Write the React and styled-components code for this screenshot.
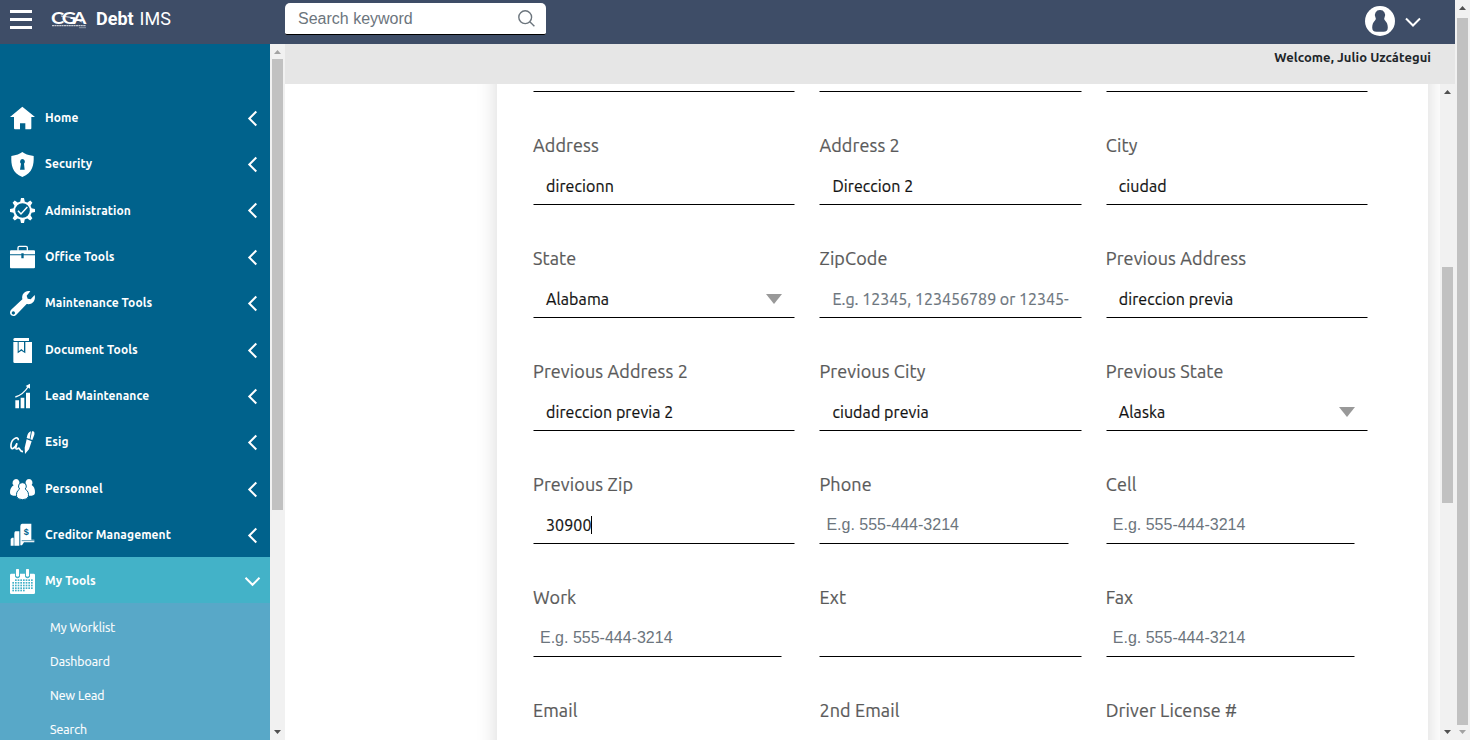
import React from 'react';
import styled, { createGlobalStyle } from 'styled-components';

const GlobalStyle = createGlobalStyle`
  * { box-sizing: border-box; }
  body { margin: 0; overflow: hidden; background: #fff; font-family: Ubuntu, "Noto Sans", sans-serif; }
`;

const Screen = styled.div`
  display: flex;
  width: 1470px;
  height: 740px;
  overflow: hidden;
`;
const Page = styled.div`
  flex: 1;
  display: flex;
  flex-direction: column;
  min-width: 0;
`;

const Header = styled.header`
  height: 44px;
  flex: none;
  display: flex;
  align-items: flex-start;
  background: #3e4d67;
  color: #fff;
`;
const Brand = styled.div`
  width: 285px;
  height: 38px;
  padding-left: 10px;
  display: flex;
  align-items: center;
`;
const Burger = styled.div`
  width: 22px;
  height: 19px;
  margin-top: 1px;
  display: flex;
  flex-direction: column;
  justify-content: space-between;
  i { height: 3px; background: #fff; }
`;
const Logo = styled.svg`
  width: 36px;
  height: 20px;
  margin: 0 8px 0 20px;
`;
const Product = styled.div`
  font: 400 18px/38px Roboto, sans-serif;
  white-space: pre;
  word-spacing: 1.5px;
  b { font-weight: 700; }
`;
const SearchBox = styled.div`
  width: 261px;
  height: 32px;
  margin-top: 3px;
  padding: 0 11px 0 13px;
  display: flex;
  align-items: center;
  justify-content: space-between;
  background: #fff;
  border-bottom: 1px solid #000;
  border-radius: 5px 5px 2px 2px;
  color: #6c757d;
  font: 16px "Liberation Sans", Arial, sans-serif;
`;
const Account = styled.div`
  margin-left: auto;
  height: 41px;
  padding-right: 34px;
  display: flex;
  align-items: center;
  gap: 10px;
`;
const AccountArrow = styled.svg`
  width: 16px;
  height: 10px;
  margin-top: 3px;
`;

const Body = styled.div`
  flex: 1;
  display: flex;
  min-height: 0;
`;
const Sidebar = styled.nav`
  width: 270px;
  flex: none;
  padding-top: 49.4px;
  background: #00628c;
  color: #fff;
  overflow: hidden;
`;
const MenuRow = styled.div`
  height: 46.36px;
  padding: 3.4px ${p => (p.$open ? 9 : 12)}px 0 10px;
  display: flex;
  align-items: center;
  background: ${p => (p.$open ? '#43b2c8' : 'transparent')};
  font-size: 12px;
  font-weight: 700;
  letter-spacing: 0.1px;
`;
const MenuIcon = styled.svg`
  width: 25px;
  height: 25px;
  margin-right: 10px;
  flex: none;
  fill: #fff;
`;
const MenuLabel = styled.div`
  flex: 1;
  height: 18px;
  margin-top: -0.9px;
  line-height: 18px;
`;
const SubMenu = styled.div`
  height: 200px;
  padding: 7.4px 0 0 50px;
  background: #58a8c8;
`;
const SubItem = styled.div`
  height: 34px;
  line-height: 34px;
  font-size: 12.3px;
  -webkit-text-stroke: 0.15px;
`;

const Main = styled.main`
  flex: 1;
  display: flex;
  flex-direction: column;
  min-width: 0;
`;
const Welcome = styled.div`
  height: 40px;
  flex: none;
  padding: 4px 24px 0 0;
  background: #e6e6e6;
  color: #212529;
  font-size: 13px;
  font-weight: 700;
  letter-spacing: 0.06px;
  line-height: 19px;
  text-align: right;
`;
const Content = styled.div`
  flex: 1;
  display: flex;
  min-height: 0;
`;
const Canvas = styled.div`
  flex: 1;
  overflow: hidden;
  padding-left: 212px;
`;
const Card = styled.section`
  width: 931px;
  height: 900px;
  margin-top: -40px;
  padding: 40px 60px 0 36px;
  background: #fff;
  box-shadow: 0 0 20px rgba(0, 0, 0, 0.16);
`;
const Grid = styled.div`
  display: grid;
  grid-template-columns: repeat(3, 262.4px);
  column-gap: 24px;
`;
const FieldTail = styled.div`
  height: 8px;
  border: 1px solid transparent;
  border-bottom-color: #000;
`;
const Field = styled.div`
  height: 113px;
  padding-top: 40px;
`;
const Label = styled.div`
  height: 27px;
  line-height: 27px;
  font-size: 18px;
  letter-spacing: 0.12px;
  color: #5a5a5a;
  -webkit-text-stroke: 0.2px;
`;
const Control = styled.div`
  width: ${p => (p.$phone ? '249.2px' : '100%')};
  height: 46px;
  padding: ${p => (p.$phone ? '14px 6px 0' : '16px 12px 0')};
  display: flex;
  justify-content: space-between;
  border: 1px solid transparent;
  border-bottom-color: #000;
  color: ${p => (p.$hint ? '#6c757d' : '#111')};
  font-family: ${p => (p.$phone ? '"Liberation Sans", Arial, sans-serif' : 'inherit')};
  font-size: 16px;
  letter-spacing: ${p => (p.$hint ? 0 : 0.09)}px;
  line-height: ${p => (p.$phone ? 23 : 21)}px;
  -webkit-text-stroke: ${p => (p.$phone ? 0 : 0.2)}px;
`;
const Typed = styled.span`
  display: flex;
  white-space: nowrap;
`;
const Caret = styled.i`
  width: 1px;
  height: 18px;
  margin: 1px 0 0 -0.9px;
  background: #000;
`;
const Triangle = styled.i`
  width: 0;
  height: 0;
  margin-top: 5px;
  border: 8px solid transparent;
  border-top: 10px solid #999;
  border-bottom: 0;
`;

const Track = styled.div`
  width: 15px;
  flex: none;
  padding: 0 2px;
  display: flex;
  flex-direction: column;
  align-items: center;
  background: #f1f1f1;
`;
const Arrow = styled.i`
  width: 7px;
  height: 4px;
  flex: none;
  margin: ${p => (p.$down ? 'auto 0 6px' : '6px 0 5px')};
  background: ${p => (p.$dim ? '#a3a3a3' : '#505050')};
  clip-path: ${p => (p.$down ? 'polygon(0 0, 100% 0, 50% 100%)' : 'polygon(50% 0, 100% 100%, 0 100%)')};
`;
const Thumb = styled.div`
  width: 11px;
  height: ${p => p.$h}px;
  margin-top: ${p => p.$top}px;
  flex: none;
  background: #c1c1c1;
`;

function Scrollbar({ top, h, upDim, downDim }) {
  return (
    <Track>
      <Arrow $dim={upDim} />
      <Thumb $top={top} $h={h} />
      <Arrow $down $dim={downDim} />
    </Track>
  );
}

const BG = '#00628c';

const icons = {
  home: <path d="M37 2 L75 33 H64 V67 Q64 70 61 70 H46 V52 H30 V70 H15 Q12 70 12 67 V33 H0 Z" />,
  shield: (
    <>
      <path d="M37 0 C44 6 55 10 71 12 C72 40 68 62 37 75 C6 62 3 40 4 12 C19 10 30 6 37 0Z" />
      <path fill={BG} d="M37 21 a8 8 0 0 1 5 14 L44 53 H30 L33 35 a8 8 0 0 1 4 -14Z" />
    </>
  ),
  gear: (
    <>
      {[0, 45, 90, 135, 180, 225, 270, 315].map(a => (
        <path key={a} transform={`rotate(${a} 37.5 37.5)`} d="M33 0 H42 L45 14 H30 Z" />
      ))}
      <circle cx="37.5" cy="37.5" r="25" fill={BG} stroke="#fff" strokeWidth="6" />
      <path d="M24 38 L33 48 L52 27" fill="none" stroke="#fff" strokeWidth="4.5" />
    </>
  ),
  briefcase: (
    <>
      <path d="M24 17 V8 Q24 4 28 4 H48 Q52 4 52 8 V17" fill="none" stroke="#fff" strokeWidth="4" />
      <path d="M3 16 H72 Q75 16 75 19 V28 H41 V25 H34 V28 H0 V19 Q0 16 3 16Z" />
      <path d="M0 31 H34 V40 H41 V31 H75 V67 Q75 70 72 70 H3 Q0 70 0 67Z" />
    </>
  ),
  wrench: (
    <path
      fillRule="evenodd"
      d="M61 1 L50 14 L53 23 L62 25 L74 12 C78 28 68 42 50 39 L19 71 C13 78 1 75 0 66 C0 61 2 58 5 55 L37 25 C34 9 46 -3 61 1Z M10 61 a5 5 0 1 0 .1 0Z"
    />
  ),
  book: (
    <>
      <path d="M14 0 H57 V9 H14 Q10 9 10 5 Q10 0 14 0Z" />
      <path d="M10 12 H66 V75 H14 Q10 75 10 71Z" />
      <path fill={BG} d="M23 12 H26 V40 L34 33 L42 40 V12 H46 V46 L34 38 L23 46Z" />
    </>
  ),
  chart: (
    <>
      <path d="M16 49 H27 V73 H16Z M32 41 H43 V73 H32Z M48 26 H60 V73 H48Z" />
      <path d="M16 39 C34 34 46 22 56 6" fill="none" stroke="#fff" strokeWidth="4" />
      <path d="M60 -1 L60 14 L47 6Z" />
    </>
  ),
  sign: (
    <>
      <path
        d="M25 31 C25 16 5 26 3 44 C1 64 14 56 21 40 C18 50 14 62 24 55 C30 51 27 65 39 65"
        fill="none"
        stroke="#fff"
        strokeWidth="5"
      />
      <path d="M50 28 L65 34 L57 58 L45 72 L44 53Z M50 24 Q53 6 63 4 L59 27Z M61 28 L66 4 Q75 2 73 14 L67 30Z" />
    </>
  ),
  people: (
    <>
      <path d="M18 6 a11 11 0 0 1 8 18 Q34 27 33 35 L26 44 L26 56 H10 Q0 56 0 46 Q0 32 11 25 A11 11 0 0 1 18 6Z" />
      <path d="M57 6 a11 11 0 0 1 8 18 Q75 30 75 46 Q75 56 65 56 H49 V44 L42 35 Q42 27 49 24 A11 11 0 0 1 57 6Z" />
      <path
        stroke={BG}
        strokeWidth="3"
        d="M37.5 17 a11 11 0 0 1 8 19 Q58 44 55 59 Q52 68 37.5 68 Q23 68 20 59 Q17 44 29 36 A11 11 0 0 1 37.5 17Z"
      />
    </>
  ),
  invoice: (
    <>
      <path d="M36 2 H64 V50 H73 V58 H42 L36 67 H31 V10 Q31 2 36 2Z" />
      <path d="M16 25 H28 V68 H13 V33 Q13 25 16 25Z M6 44 H11 V68 H2 V48Z" />
      <path d="M35 53 H74" stroke={BG} strokeWidth="2" />
      <text x="48.5" y="37" fill={BG} fontSize="27" fontWeight="700" fontFamily="Liberation Sans" textAnchor="middle">$</text>
    </>
  ),
  calendar: (
    <>
      <path d="M4 14 H15 V23 Q23 32 30 23 V14 H45 V23 Q52 32 60 23 V14 H71 Q75 14 75 18 V71 Q75 75 71 75 H4 Q0 75 0 71 V18 Q0 14 4 14Z" />
      <path d="M18 2 Q18 0 20 0 H25 Q27 0 27 2 V21 Q23 25 18 21Z M48 2 Q48 0 50 0 H55 Q57 0 57 2 V21 Q52 25 48 21Z" />
      <g fill="#43b2c8">
        {[31, 39, 47, 55, 62].map((y, r) =>
          [7, 15, 23, 31, 39, 47, 55, 63]
            .filter((x, c) => !(r === 0 && c === 0) && !(r === 4 && c > 4))
            .map(x => <rect key={`${x}-${y}`} x={x} y={y} width="5" height="5" />),
        )}
      </g>
    </>
  ),
};

const menu = [
  ['Home', 'home'],
  ['Security', 'shield'],
  ['Administration', 'gear'],
  ['Office Tools', 'briefcase'],
  ['Maintenance Tools', 'wrench'],
  ['Document Tools', 'book'],
  ['Lead Maintenance', 'chart'],
  ['Esig', 'sign'],
  ['Personnel', 'people'],
  ['Creditor Management', 'invoice'],
  ['My Tools', 'calendar'],
];
const subMenu = ['My Worklist', 'Dashboard', 'New Lead', 'Search'];

const phone = { text: 'E.g. 555-444-3214', hint: true, phone: true };
const fields = [
  { label: 'Address', text: 'direcionn' },
  { label: 'Address 2', text: 'Direccion 2' },
  { label: 'City', text: 'ciudad' },
  { label: 'State', text: 'Alabama', select: true },
  { label: 'ZipCode', text: 'E.g. 12345, 123456789 or 12345-', hint: true },
  { label: 'Previous Address', text: 'direccion previa' },
  { label: 'Previous Address 2', text: 'direccion previa 2' },
  { label: 'Previous City', text: 'ciudad previa' },
  { label: 'Previous State', text: 'Alaska', select: true },
  { label: 'Previous Zip', text: '30900', caret: true },
  { label: 'Phone', ...phone },
  { label: 'Cell', ...phone },
  { label: 'Work', ...phone },
  { label: 'Ext' },
  { label: 'Fax', ...phone },
  { label: 'Email' },
  { label: '2nd Email' },
  { label: 'Driver License #' },
];

function Chevron({ down }) {
  return down ? (
    <svg width="17" height="11" viewBox="0 0 17 11" fill="none" stroke="#fff" strokeWidth="2">
      <path d="M1.5 1.8 L8.5 8.8 L15.5 1.8" />
    </svg>
  ) : (
    <svg width="11" height="17" viewBox="0 0 11 17" fill="none" stroke="#fff" strokeWidth="2">
      <path d="M9.3 1.5 L2.3 8.5 L9.3 15.5" />
    </svg>
  );
}

export default function App() {
  return (
    <Screen>
      <GlobalStyle />
      <Page>
        <Header>
          <Brand>
            <Burger><i /><i /><i /></Burger>
            <Logo viewBox="0 0 36 20" overflow="visible">
              <text
                transform="scale(1.14 1)"
                x="-0.8 8.6 18"
                y="15"
                fill="#fff"
                fontFamily="Lato, sans-serif"
                fontSize="17.5"
                fontWeight="700"
              >
                CGA
              </text>
              <path d="M9 7 Q20 7 30 13" fill="none" stroke="#fff" strokeWidth="0.8" />
              <path d="M0 16.7 H34" stroke="#c5cad2" strokeWidth="1.2" strokeDasharray="2 .4" />
              <path d="M27 18.7 H34" stroke="#8b94a4" strokeWidth="1" />
            </Logo>
            <Product><b>Debt</b> IMS</Product>
          </Brand>
          <SearchBox>
            Search keyword
            <svg width="17" height="17" viewBox="0 0 17 17" fill="none" stroke="#6c757d" strokeWidth="1.4">
              <circle cx="7.2" cy="7.2" r="6.4" />
              <path d="M11.8 11.8 L16.4 16.2" />
            </svg>
          </SearchBox>
          <Account>
            <svg width="30" height="30" viewBox="0 0 30 30">
              <circle cx="15" cy="15" r="15" fill="#fff" />
              <path fill="#3e4d67" d="M15 4 a5 5 0 0 1 4.5 7.5 Q18.5 13.2 20 14.5 Q22.8 17 22.8 21.5 Q22.8 25.8 18.5 25.8 H11.5 Q7.2 25.8 7.2 21.5 Q7.2 17 10 14.5 Q11.5 13.2 10.5 11.5 A5 5 0 0 1 15 4Z" />
            </svg>
            <AccountArrow viewBox="0 0 16 10" fill="none" stroke="#fff" strokeWidth="2">
              <path d="M1 1.5 L8 8.5 L15 1.5" />
            </AccountArrow>
          </Account>
        </Header>
        <Body>
          <Sidebar>
            {menu.map(([name, icon]) => {
              const open = name === 'My Tools';
              return (
                <MenuRow key={name} $open={open}>
                  <MenuIcon viewBox="0 0 75 75" overflow="visible">{icons[icon]}</MenuIcon>
                  <MenuLabel>{name}</MenuLabel>
                  <Chevron down={open} />
                </MenuRow>
              );
            })}
            <SubMenu>
              {subMenu.map(name => <SubItem key={name}>{name}</SubItem>)}
            </SubMenu>
          </Sidebar>
          <Scrollbar top={0} h={451} upDim />
          <Main>
            <Welcome>Welcome, Julio Uzcátegui</Welcome>
            <Content>
              <Canvas>
                <Card>
                  <Grid>
                    <FieldTail /><FieldTail /><FieldTail />
                    {fields.map(f => (
                      <Field key={f.label}>
                        <Label>{f.label}</Label>
                        <Control $phone={f.phone} $hint={f.hint}>
                          {f.text && (
                            <Typed>
                              {f.text}
                              {f.caret && <Caret />}
                            </Typed>
                          )}
                          {f.select && <Triangle />}
                        </Control>
                      </Field>
                    ))}
                  </Grid>
                </Card>
              </Canvas>
              <Scrollbar top={168} h={236} />
            </Content>
          </Main>
        </Body>
      </Page>
      <Scrollbar top={3} h={707} downDim />
    </Screen>
  );
}
